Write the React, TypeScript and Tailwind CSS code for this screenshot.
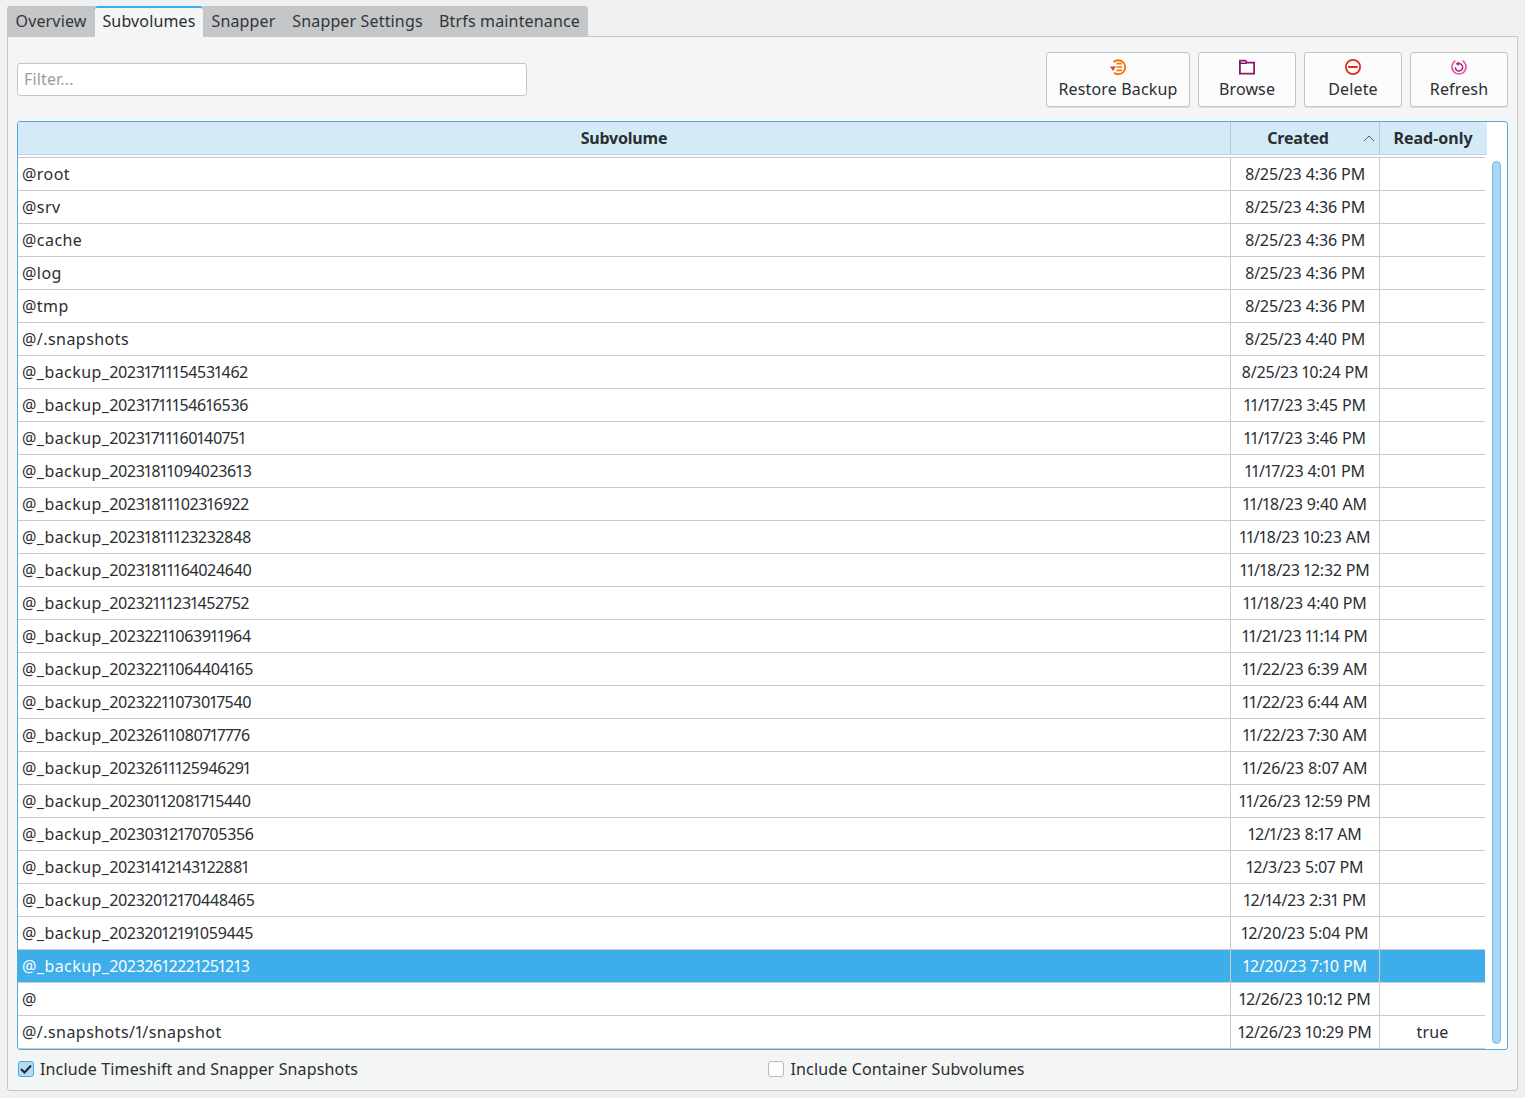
import React from "react";

const rows: [string, string, string?][] = [
  ["@root", "8/25/23 4:36 PM"],
  ["@srv", "8/25/23 4:36 PM"],
  ["@cache", "8/25/23 4:36 PM"],
  ["@log", "8/25/23 4:36 PM"],
  ["@tmp", "8/25/23 4:36 PM"],
  ["@/.snapshots", "8/25/23 4:40 PM"],
  ["@_backup_20231711154531462", "8/25/23 10:24 PM"],
  ["@_backup_20231711154616536", "11/17/23 3:45 PM"],
  ["@_backup_20231711160140751", "11/17/23 3:46 PM"],
  ["@_backup_20231811094023613", "11/17/23 4:01 PM"],
  ["@_backup_20231811102316922", "11/18/23 9:40 AM"],
  ["@_backup_20231811123232848", "11/18/23 10:23 AM"],
  ["@_backup_20231811164024640", "11/18/23 12:32 PM"],
  ["@_backup_20232111231452752", "11/18/23 4:40 PM"],
  ["@_backup_20232211063911964", "11/21/23 11:14 PM"],
  ["@_backup_20232211064404165", "11/22/23 6:39 AM"],
  ["@_backup_20232211073017540", "11/22/23 6:44 AM"],
  ["@_backup_20232611080717776", "11/22/23 7:30 AM"],
  ["@_backup_20232611125946291", "11/26/23 8:07 AM"],
  ["@_backup_20230112081715440", "11/26/23 12:59 PM"],
  ["@_backup_20230312170705356", "12/1/23 8:17 AM"],
  ["@_backup_20231412143122881", "12/3/23 5:07 PM"],
  ["@_backup_20232012170448465", "12/14/23 2:31 PM"],
  ["@_backup_20232012191059445", "12/20/23 5:04 PM"],
  ["@_backup_20232612221251213", "12/20/23 7:10 PM"],
  ["@", "12/26/23 10:12 PM"],
  ["@/.snapshots/1/snapshot", "12/26/23 10:29 PM", "true"],
];

const selectedRow = 24;

// letters run wider and digits narrower in the subvolume names
function SubvolumeName({ name }: { name: string }) {
  return (
    <>
      {name.split(/(\d+)/).map((part, i) => (
        <span key={i} className={/\d/.test(part) ? "tracking-[-0.3px]" : "tracking-[0.45px]"}>
          {part}
        </span>
      ))}
    </>
  );
}

function RestoreIcon() {
  return (
    <svg width="18" height="18" viewBox="0 0 18 18" fill="none">
      <path d="M4.4 4.2A7 7 0 1 1 5 14.8" stroke="#f67400" strokeWidth="1.8" />
      <path d="M7.5 5.6h5.5M7.5 9h5.5M7.5 12.4h5.5" stroke="#f67400" strokeWidth="1.7" />
      <path d="M1 8.5h6L4 13z" fill="#e0402a" />
    </svg>
  );
}

function FolderIcon() {
  return (
    <svg width="18" height="18" viewBox="0 0 18 18" fill="none">
      <path d="M1.9 15.6V2.6h5.6l1.4 2h7.2v11z" fill="#fff" stroke="#8a1a6c" strokeWidth="1.8" />
      <path d="M1.5 4.6h7.2v1.4H1.5z" fill="#6e1658" />
    </svg>
  );
}

function DeleteIcon() {
  return (
    <svg width="18" height="18" viewBox="0 0 18 18" fill="none">
      <circle cx="9" cy="9" r="7.1" stroke="#da2c1f" strokeWidth="1.8" />
      <path d="M4.2 9h9.6" stroke="#da2c1f" strokeWidth="2" />
    </svg>
  );
}

function RefreshIcon() {
  return (
    <svg width="18" height="18" viewBox="0 0 18 18" fill="none">
      <path d="M5.4 2.8a7.1 7.1 0 1 0 7.2 0" stroke="#ee4fb0" strokeWidth="1.7" />
      <path d="M8.6 5.6a3.7 3.7 0 1 1-3.3 3.6" stroke="#a81c70" strokeWidth="1.4" />
      <path d="M8.8 3.4v4.6L5.6 5.7z" fill="#a81c70" />
    </svg>
  );
}

function ToolButton({ width, label, icon }: { width: string; label: string; icon: React.ReactNode }) {
  return (
    <button className={`${width} h-[55px] flex flex-col items-center pt-[5px] bg-[#fcfcfc] border border-[#c2c4c5] rounded-[3px] shadow-[0_1px_0_rgba(0,0,0,0.08)]`}>
      {icon}
      <span className="leading-[22px] mt-[2px]">{label}</span>
    </button>
  );
}

export default function App() {
  return (
    <div className="w-[1525px] h-[1098px] bg-[#eff0f1] overflow-hidden pt-[6px] pl-[7px] text-[16px] text-[#2a2e32] font-['Noto_Sans',sans-serif] tracking-[0.15px] proportional-nums">
      <div className="flex h-[30px] items-stretch leading-[30px] text-center">
        <div className="w-[88px] bg-[#c4c6c8] rounded-tl-[3px] text-[#31363b]">Overview</div>
        <div className="w-[108px] bg-[#f4f5f5] border-t-2 border-[#3daee9] leading-[26px] -mb-px relative z-10 rounded-t-[3px]">Subvolumes</div>
        <div className="w-[81px] bg-[#c4c6c8] text-[#31363b]">Snapper</div>
        <div className="w-[147px] bg-[#c4c6c8] text-[#31363b]">Snapper Settings</div>
        <div className="w-[157px] bg-[#c4c6c8] rounded-tr-[3px] text-[#31363b]">Btrfs maintenance</div>
      </div>

      <div className="w-[1511px] h-[1055px] bg-[#f4f5f5] border border-[#c4c6c8] rounded-b-[3px] pl-[9px] pr-[9px] pt-[15px]">
        <div className="flex justify-between items-start h-[69px] w-[1491px]">
          <div className="w-[510px] h-[33px] mt-[11px] bg-white border border-[#c4c6c8] rounded-[3px] pl-[6px] leading-[30px] text-[#9a9ea1]">
            Filter...
          </div>
          <div className="flex gap-[8px]">
            <ToolButton width="w-[144px]" label="Restore Backup" icon={<RestoreIcon />} />
            <ToolButton width="w-[98px]" label="Browse" icon={<FolderIcon />} />
            <ToolButton width="w-[98px]" label="Delete" icon={<DeleteIcon />} />
            <ToolButton width="w-[98px]" label="Refresh" icon={<RefreshIcon />} />
          </div>
        </div>

        <div className="relative w-[1491px] h-[929px] bg-white border border-[#55a9d9] rounded-[3px] overflow-hidden">
          <div className="flex h-[33px] w-[1469px] bg-[#d5eaf7] font-bold tracking-[-0.2px] leading-[32px] text-center border-b border-[#bcd3e0]">
            <div className="w-[1213px] border-r border-[#b5c9d5]">Subvolume</div>
            <div className="relative w-[149px] border-r border-[#b5c9d5] pr-[14px]">
              Created
              <svg className="absolute right-[4px] top-[13px]" width="12" height="7" viewBox="0 0 12 7" fill="none">
                <path d="M1 6l5-5 5 5" stroke="#5b6064" strokeWidth="1" />
              </svg>
            </div>
            <div className="w-[107px] tracking-[0px] pr-[1px]">Read-only</div>
          </div>
          <div className="w-[1467px] h-[2px] bg-white border-b border-[#c4c6c8] box-content" />

          {rows.map(([name, created, readOnly], i) => (
            <div
              key={name}
              className={`flex h-[33px] w-[1467px] leading-[32px] border-b border-[#c9cbcd] last:border-b-0 ${i === selectedRow ? "bg-[#3daee9] text-[#fcfcfc]" : ""}`}
            >
              <div className="w-[1213px] pl-[4px] border-r border-[#c9cbcd]">
                <SubvolumeName name={name} />
              </div>
              <div className="w-[149px] text-center border-r border-[#c9cbcd] tracking-[-0.1px]">{created}</div>
              <div className="w-[105px] text-center">{readOnly}</div>
            </div>
          ))}

          <div className="absolute right-[6px] top-[39px] w-[9px] h-[883px] bg-[#a9d6f0] border border-[#71bde8] rounded-full" />
        </div>

        <div className="grid grid-cols-2 gap-x-[10px] mt-[8px] pl-[1px] w-[1490px]">
          <label className="flex items-center gap-[6px] h-[22px]">
            <span className="w-[16px] h-[16px] flex items-center justify-center bg-[#b4dcf3] border border-[#3daee9] rounded-[3px]">
              <svg width="12" height="10" viewBox="0 0 12 10" fill="none">
                <path d="M1 5l3.5 3.5L11 1.5" stroke="#232629" strokeWidth="2" />
              </svg>
            </span>
            Include Timeshift and Snapper Snapshots
          </label>
          <label className="flex items-center gap-[7px] h-[22px]">
            <span className="w-[16px] h-[16px] bg-[#fcfcfc] border border-[#b9bbbd] rounded-[3px]" />
            Include Container Subvolumes
          </label>
        </div>
      </div>
    </div>
  );
}
